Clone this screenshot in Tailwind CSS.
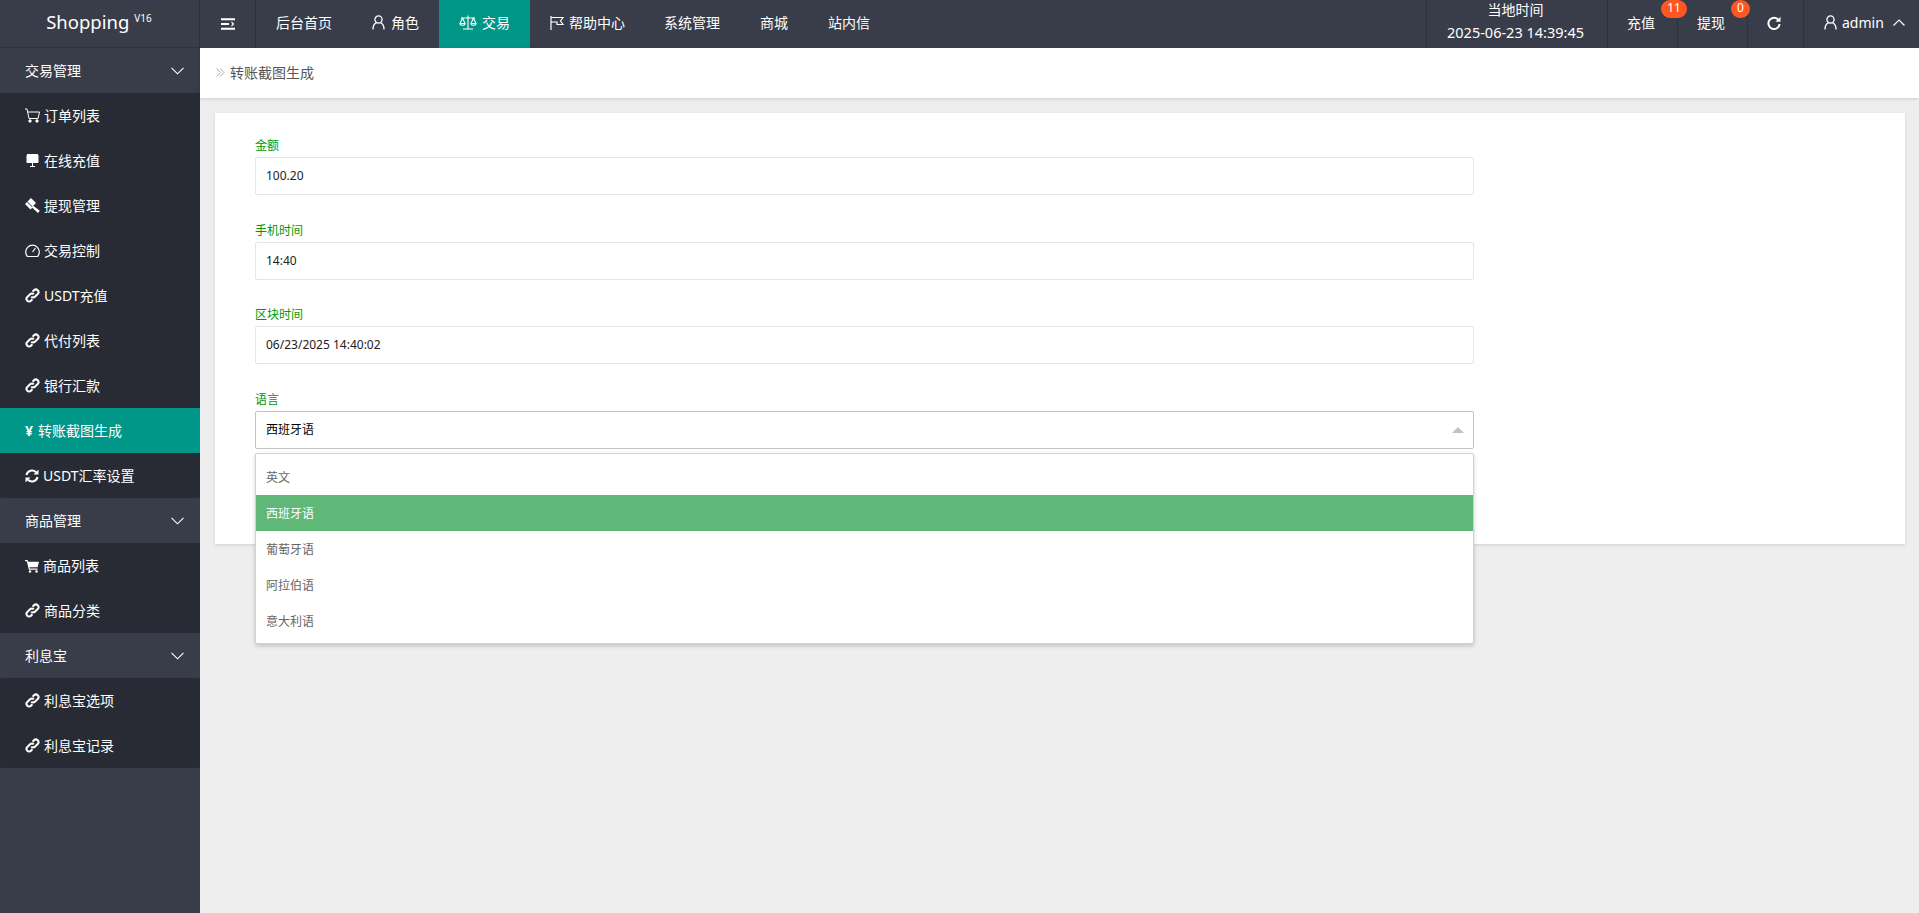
<!DOCTYPE html>
<html lang="zh-CN">
<head>
<meta charset="utf-8">
<title>转账截图生成</title>
<script src="https://cdn.jsdelivr.net/npm/@tailwindcss/browser@4"></script>
</head>
<body class="w-[1919px] h-[913px] overflow-hidden bg-[#eeeeee] text-[14px] font-['Microsoft_YaHei','Noto_Sans','Noto_Sans_CJK_SC',sans-serif]">
<div class="flex flex-col h-[913px]">
  <!-- header -->
  <header class="flex h-12 shrink-0 bg-[#393d49] text-white">
    <div class="w-[200px] shrink-0 border-r border-b border-[#2f323c] flex items-center justify-center pb-[2px] pr-[1px]">
      <span class="text-[18.5px] leading-none">Shopping</span><span class="text-[10px] leading-none ml-[5px] -mt-[10px]">V16</span>
    </div>
    <div class="w-[56px] shrink-0 border-r border-[#2f323c] flex items-center justify-center">
      <svg width="14" height="12" viewBox="0 0 14 12" fill="none" stroke="#fff" stroke-width="2"><path d="M0 1.2h14M0 6h8M0 10.8h14"/><path d="M10.5 4l2 2-2 2" stroke-width="1.2"/></svg>
    </div>
    <nav class="flex">
      <a class="px-5 pb-[3px] flex items-center">后台首页</a>
      <a class="px-5 pb-[3px] flex items-center gap-[6px]">
        <svg width="13" height="15" viewBox="0 0 13 15" fill="none" stroke="#fff" stroke-width="1.3"><circle cx="6.5" cy="4.5" r="3.6"/><path d="M1 14.5c0-3.6 1.6-6 3.4-6.6M12 14.5c0-3.6-1.6-6-3.4-6.6"/></svg>
        <span>角色</span>
      </a>
      <a class="pl-[20px] pr-5 pb-[3px] flex items-center gap-[5px] bg-[#009688]">
        <svg width="18" height="15" viewBox="0 0 18 15" fill="none" stroke="#fff" stroke-width="1.1"><path d="M9 0.5v13M4 14h10M2 3h14M3.5 3L1 8.5h5zM14.5 3L12 8.5h5z"/><path d="M1 9c.6 1.6 4.4 1.6 5 0M12 9c.6 1.6 4.4 1.6 5 0"/></svg>
        <span>交易</span>
      </a>
      <a class="pl-5 pr-[19px] pb-[3px] flex items-center gap-[5px]">
        <svg width="14" height="14" viewBox="0 0 14 14" fill="none" stroke="#fff" stroke-width="1.2"><path d="M1 0v14M1 1.5h12l-2.5 3.5L13 8.5H7V6H1"/></svg>
        <span>帮助中心</span>
      </a>
      <a class="px-5 pb-[3px] flex items-center">系统管理</a>
      <a class="px-5 pb-[3px] flex items-center">商城</a>
      <a class="px-5 pb-[3px] flex items-center">站内信</a>
    </nav>
    <div class="ml-auto flex">
      <div class="w-[181px] border-l border-[#2f323c] flex flex-col items-center pt-[1px] pr-[3px]">
        <span class="text-[14px] leading-[18px] h-[22px]">当地时间</span>
        <span class="text-[14.5px] leading-[19px] whitespace-nowrap">2025-06-23 14:39:45</span>
      </div>
      <div class="relative w-[70px] border-l border-[#2f323c] flex items-center pl-[19px] pb-[3px]">
        <span>充值</span>
        <span class="absolute left-[53px] top-0 w-[26px] h-[18px] rounded-full bg-[#ff5722] text-[12px] leading-[16px] text-center z-10">11</span>
      </div>
      <div class="relative w-[70px] border-l border-[#2f323c] flex items-center pl-[19px] pb-[3px]">
        <span>提现</span>
        <span class="absolute left-[53px] top-0 w-[19px] h-[18px] rounded-full bg-[#ff5722] text-[12px] leading-[16px] text-center z-10">0</span>
      </div>
      <div class="w-[56px] border-l border-[#2f323c] flex items-center justify-center pr-[3px] pb-[2px]">
        <svg width="14" height="14" viewBox="0 0 14 14" fill="none"><path d="M11.6 4.2A5.6 5.6 0 1 0 12.6 8" stroke="#fff" stroke-width="2"/><path d="M13.5 0.8v5h-5z" fill="#fff"/></svg>
      </div>
      <div class="w-[116px] border-l border-[#2f323c] flex items-center pl-[20px] pb-[3px]">
        <svg width="13" height="15" viewBox="0 0 13 15" fill="none" stroke="#fff" stroke-width="1.3"><circle cx="6.5" cy="4.5" r="3.6"/><path d="M1 14.5c0-3.6 1.6-6 3.4-6.6M12 14.5c0-3.6-1.6-6-3.4-6.6"/></svg>
        <span class="ml-[5px]">admin</span>
        <svg class="ml-[9px]" width="12" height="7" viewBox="0 0 12 7" fill="none" stroke="#fff" stroke-width="1.2"><path d="M0.5 6.5L6 1l5.5 5.5"/></svg>
      </div>
    </div>
  </header>

  <div class="flex flex-1 min-h-0">
    <!-- sidebar -->
    <aside class="w-[200px] shrink-0 bg-[#393d49] text-white">
      <div class="h-[45px] pl-[25px] pr-[16px] flex items-center justify-between">
        <span>交易管理</span>
        <svg width="13" height="8" viewBox="0 0 13 8" fill="none" stroke="#fff" stroke-width="1.1"><path d="M0.5 0.8l6 6 6-6"/></svg>
      </div>
      <ul class="bg-[#282b33] rounded-[2px]">
        <li class="h-[45px] pl-[25px] flex items-center gap-[4px]">
          <svg class="w-[15px] h-[15px]" viewBox="0 0 15 15" fill="none" stroke="#fff" stroke-width="1"><path d="M0 1h2l2 9.5h9L14.5 4H3"/><circle cx="5" cy="13" r="1.2" fill="#fff"/><circle cx="12" cy="13" r="1.2" fill="#fff"/></svg>
          <span>订单列表</span>
        </li>
        <li class="h-[45px] pl-[25px] flex items-center gap-[4px]">
          <svg class="w-[15px] h-[15px]" viewBox="0 0 15 15" fill="#fff"><rect x="1.5" y="2" width="12" height="8" rx="0.8"/><path d="M2 2h11v-1H2zM5 13h5v1H5zM7 10h1v3H7z"/></svg>
          <span>在线充值</span>
        </li>
        <li class="h-[45px] pl-[25px] flex items-center gap-[4px]">
          <svg class="w-[15px] h-[15px]" viewBox="0 0 15 15" fill="#fff"><path d="M6 0L11 5 7.5 8.5 2.5 3.5z"/><path d="M0 6l2-2 5.5 5.5-2 2zM8 7.5l6.8 5.2-1.8 2.3L6.8 9.2z"/></svg>
          <span>提现管理</span>
        </li>
        <li class="h-[45px] pl-[25px] flex items-center gap-[4px]">
          <svg class="w-[15px] h-[15px]" viewBox="0 0 15 15" fill="none" stroke="#fff" stroke-width="1.2"><path d="M2.4 13.5a6.8 6.8 0 1 1 10.2 0zM7.5 9l3-4"/></svg>
          <span>交易控制</span>
        </li>
        <li class="h-[45px] pl-[25px] flex items-center gap-[4px]">
          <svg class="w-[15px] h-[15px]" viewBox="0 0 15 15" fill="none" stroke="#fff" stroke-width="2"><path d="M6.2 8.8a2.6 2.6 0 0 0 3.7 0l2.8-2.8a2.6 2.6 0 0 0-3.7-3.7L7.6 3.7"/><path d="M8.8 6.2a2.6 2.6 0 0 0-3.7 0L2.3 9a2.6 2.6 0 0 0 3.7 3.7l1.4-1.4"/></svg>
          <span>USDT充值</span>
        </li>
        <li class="h-[45px] pl-[25px] flex items-center gap-[4px]">
          <svg class="w-[15px] h-[15px]" viewBox="0 0 15 15" fill="none" stroke="#fff" stroke-width="2"><path d="M6.2 8.8a2.6 2.6 0 0 0 3.7 0l2.8-2.8a2.6 2.6 0 0 0-3.7-3.7L7.6 3.7"/><path d="M8.8 6.2a2.6 2.6 0 0 0-3.7 0L2.3 9a2.6 2.6 0 0 0 3.7 3.7l1.4-1.4"/></svg>
          <span>代付列表</span>
        </li>
        <li class="h-[45px] pl-[25px] flex items-center gap-[4px]">
          <svg class="w-[15px] h-[15px]" viewBox="0 0 15 15" fill="none" stroke="#fff" stroke-width="2"><path d="M6.2 8.8a2.6 2.6 0 0 0 3.7 0l2.8-2.8a2.6 2.6 0 0 0-3.7-3.7L7.6 3.7"/><path d="M8.8 6.2a2.6 2.6 0 0 0-3.7 0L2.3 9a2.6 2.6 0 0 0 3.7 3.7l1.4-1.4"/></svg>
          <span>银行汇款</span>
        </li>
        <li class="h-[45px] pl-[25px] flex items-center gap-[5px] bg-[#009688]">
          <span class="font-bold w-[8px]">¥</span>
          <span>转账截图生成</span>
        </li>
        <li class="h-[45px] pl-[25px] flex items-center gap-[4px]">
          <svg class="w-[14px] h-[14px]" viewBox="0 0 14 14" fill="none"><path d="M1.5 6A5.6 5.6 0 0 1 11 3.2" stroke="#fff" stroke-width="2"/><path d="M13.5 0.5v5h-5z" fill="#fff"/><path d="M12.5 8A5.6 5.6 0 0 1 3 10.8" stroke="#fff" stroke-width="2"/><path d="M0.5 13.5v-5h5z" fill="#fff"/></svg>
          <span>USDT汇率设置</span>
        </li>
      </ul>
      <div class="h-[45px] pl-[25px] pr-[16px] flex items-center justify-between">
        <span>商品管理</span>
        <svg width="13" height="8" viewBox="0 0 13 8" fill="none" stroke="#fff" stroke-width="1.1"><path d="M0.5 0.8l6 6 6-6"/></svg>
      </div>
      <ul class="bg-[#282b33] rounded-[2px]">
        <li class="h-[45px] pl-[25px] flex items-center gap-[4px]">
          <svg class="w-[14px] h-[14px]" viewBox="0 0 14 14" fill="#fff"><path d="M0 1h2.6l.5 1.8H14l-1.4 5.4H4.6l.3 1.3h7.6v1.2H3.9L1.8 2.2H0z"/><circle cx="5" cy="12.5" r="1.3"/><circle cx="11.5" cy="12.5" r="1.3"/></svg>
          <span>商品列表</span>
        </li>
        <li class="h-[45px] pl-[25px] flex items-center gap-[4px]">
          <svg class="w-[15px] h-[15px]" viewBox="0 0 15 15" fill="none" stroke="#fff" stroke-width="2"><path d="M6.2 8.8a2.6 2.6 0 0 0 3.7 0l2.8-2.8a2.6 2.6 0 0 0-3.7-3.7L7.6 3.7"/><path d="M8.8 6.2a2.6 2.6 0 0 0-3.7 0L2.3 9a2.6 2.6 0 0 0 3.7 3.7l1.4-1.4"/></svg>
          <span>商品分类</span>
        </li>
      </ul>
      <div class="h-[45px] pl-[25px] pr-[16px] flex items-center justify-between">
        <span>利息宝</span>
        <svg width="13" height="8" viewBox="0 0 13 8" fill="none" stroke="#fff" stroke-width="1.1"><path d="M0.5 0.8l6 6 6-6"/></svg>
      </div>
      <ul class="bg-[#282b33] rounded-[2px]">
        <li class="h-[45px] pl-[25px] flex items-center gap-[4px]">
          <svg class="w-[15px] h-[15px]" viewBox="0 0 15 15" fill="none" stroke="#fff" stroke-width="2"><path d="M6.2 8.8a2.6 2.6 0 0 0 3.7 0l2.8-2.8a2.6 2.6 0 0 0-3.7-3.7L7.6 3.7"/><path d="M8.8 6.2a2.6 2.6 0 0 0-3.7 0L2.3 9a2.6 2.6 0 0 0 3.7 3.7l1.4-1.4"/></svg>
          <span>利息宝选项</span>
        </li>
        <li class="h-[45px] pl-[25px] flex items-center gap-[4px]">
          <svg class="w-[15px] h-[15px]" viewBox="0 0 15 15" fill="none" stroke="#fff" stroke-width="2"><path d="M6.2 8.8a2.6 2.6 0 0 0 3.7 0l2.8-2.8a2.6 2.6 0 0 0-3.7-3.7L7.6 3.7"/><path d="M8.8 6.2a2.6 2.6 0 0 0-3.7 0L2.3 9a2.6 2.6 0 0 0 3.7 3.7l1.4-1.4"/></svg>
          <span>利息宝记录</span>
        </li>
      </ul>
    </aside>

    <!-- main -->
    <main class="flex-1 min-w-0">
      <div class="h-[50px] bg-white shadow-[0_1px_3px_rgba(0,0,0,0.15)] flex items-center pl-4 pb-[1px] text-[#555]">
        <svg class="mr-[5px]" width="9" height="9" viewBox="0 0 9 9" fill="none" stroke="#aaa" stroke-width="1"><path d="M0.5 0.5l4 4-4 4M4 0.5l4 4-4 4"/></svg>
        <span>转账截图生成</span>
      </div>
      <section class="mt-[15px] ml-[15px] mr-[14px] h-[431px] bg-white shadow-[0_1px_3px_rgba(0,0,0,0.12)] pt-[23.33px] pl-10 text-[12px]">
        <div class="w-[1219px] relative">
          <div class="mb-[25.5px]">
            <label class="block h-[21px] leading-[20px] text-[#009900]">金额</label>
            <div class="h-[38px] border border-[#e6e6e6] rounded-[2px] pl-[10px] flex items-center text-[#222]">100.20</div>
          </div>
          <div class="mb-[25.5px]">
            <label class="block h-[21px] leading-[20px] text-[#009900]">手机时间</label>
            <div class="h-[38px] border border-[#e6e6e6] rounded-[2px] pl-[10px] flex items-center text-[#222]">14:40</div>
          </div>
          <div class="mb-[25.5px]">
            <label class="block h-[21px] leading-[20px] text-[#009900]">区块时间</label>
            <div class="h-[38px] border border-[#e6e6e6] rounded-[2px] pl-[10px] flex items-center text-[#222]">06/23/2025 14:40:02</div>
          </div>
          <div class="relative">
            <label class="block h-[21px] leading-[20px] text-[#009900]">语言</label>
            <div class="h-[38px] border border-[#c2c2c2] rounded-[2px] pl-[10px] pr-[9px] flex items-center justify-between text-black">
              <span>西班牙语</span>
              <span class="w-0 h-0 border-x-[6px] border-x-transparent border-b-[6px] border-b-[#c2c2c2]"></span>
            </div>
            <ul class="absolute left-0 right-0 top-[63px] z-20 h-[191px] bg-white border border-[#d2d2d2] rounded-[2px] shadow-[0_2px_4px_rgba(0,0,0,0.18)] py-[5px] text-[#666]">
              <li class="h-9 pl-[10px] pt-[2px] flex items-center">英文</li>
              <li class="h-9 pl-[10px] pt-[2px] flex items-center bg-[#5fb878] text-white">西班牙语</li>
              <li class="h-9 pl-[10px] pt-[2px] flex items-center">葡萄牙语</li>
              <li class="h-9 pl-[10px] pt-[2px] flex items-center">阿拉伯语</li>
              <li class="h-9 pl-[10px] pt-[2px] flex items-center">意大利语</li>
            </ul>
          </div>
        </div>
      </section>
    </main>
  </div>
</div>
</body>
</html>
